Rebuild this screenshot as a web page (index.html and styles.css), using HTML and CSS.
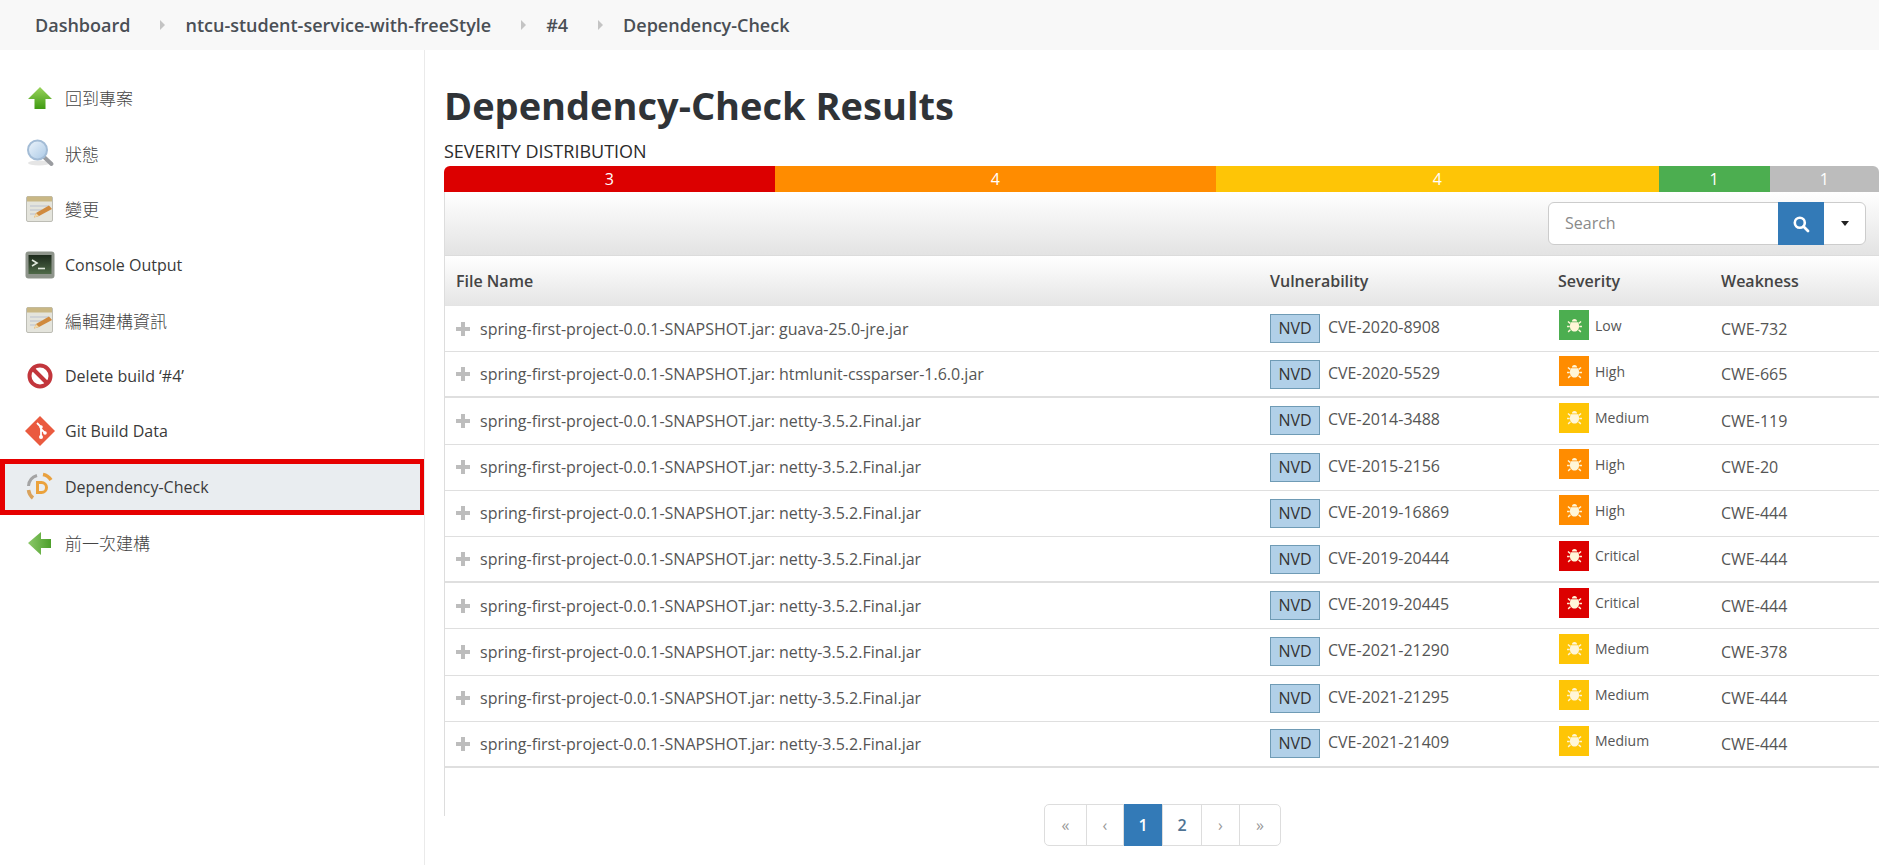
FILE: index.html
```html
<!DOCTYPE html>
<html lang="en">
<head>
<meta charset="utf-8">
<title>Dependency-Check Results</title>
<link rel="stylesheet" href="styles.css">
</head>
<body>
<svg class="defs" width="0" height="0" aria-hidden="true">
  <defs>
    <linearGradient id="gArrow" x1="0" y1="0" x2="0" y2="1"><stop offset="0" stop-color="#9ad45c"/><stop offset="1" stop-color="#3f9a12"/></linearGradient>
    <linearGradient id="gArrowL" x1="0" y1="0" x2="1" y2="0"><stop offset="0" stop-color="#8cc86a"/><stop offset="1" stop-color="#4d9f2b"/></linearGradient>
    <linearGradient id="gTerm" x1="0" y1="0" x2="0" y2="1"><stop offset="0" stop-color="#1d2a1c"/><stop offset="1" stop-color="#4f6a48"/></linearGradient>
    <linearGradient id="gLens" x1="0" y1="0" x2="1" y2="1"><stop offset="0" stop-color="#eef5fb"/><stop offset="1" stop-color="#a9c8e6"/></linearGradient>
    <symbol id="note" viewBox="0 0 30 30">
      <rect x="1.5" y="2.5" width="26" height="25" rx="1.5" fill="#e4e4dc" stroke="#bdbdb5"/>
      <rect x="2" y="2.5" width="25" height="5" fill="#c9b784"/>
      <path d="M5 12h19M5 16h12M5 20h9" stroke="#c7ccd2" stroke-width="1.4"/>
      <path d="M9 23.5l2-4.5L24 11.5l3 3.5-13 7z" fill="#d08a3e"/>
      <path d="M9 23.5l2-4.5 3 3z" fill="#f0d8a8"/>
    </symbol>
    <symbol id="bug" viewBox="0 0 16 16">
      <path d="M5.6 4.2a2.4 2.4 0 0 1 4.8 0z" fill="currentColor"/>
      <path d="M4.6 5h6.8c.6 1 .9 2.200.9 3.600 0 2.900-1.900 5-4.300 5s-4.300-2.100-4.300-5c0-1.400.3-2.600.9-3.600z" fill="currentColor"/>
      <path d="M4 6L1.800 4.200M12 6l2.200-1.800M3.500 9H1M12.500 9H15M4.200 12l-2.200 2M11.800 12l2.200 2" stroke="currentColor" stroke-width="1.300" fill="none"/>
    </symbol>
  </defs>
</svg>

<nav class="crumbs">
  <a class="crumb">Dashboard</a><span class="sep"></span>
  <a class="crumb">ntcu-student-service-with-freeStyle</a><span class="sep"></span>
  <a class="crumb">#4</a><span class="sep"></span>
  <a class="crumb">Dependency-Check</a>
</nav>

<div class="page">
  <aside class="side">
    <a class="item">
      <svg class="ico" viewBox="0 0 30 30"><path d="M15 4L27 16H20.500V26H9.500V16H3z" fill="url(#gArrow)"/></svg>
      <span class="cjk">回到專案</span>
    </a>
    <a class="item">
      <svg class="ico" viewBox="0 0 30 30"><ellipse cx="14" cy="25" rx="11" ry="2.500" fill="#e5e5e5"/><path d="M19 19l7.500 7" stroke="#9a9ca0" stroke-width="4" stroke-linecap="round"/><circle cx="12.500" cy="12" r="9.500" fill="url(#gLens)" stroke="#a3bcd6" stroke-width="2"/></svg>
      <span class="cjk">狀態</span>
    </a>
    <a class="item">
      <svg class="ico"><use href="#note"/></svg>
      <span class="cjk">變更</span>
    </a>
    <a class="item">
      <svg class="ico" viewBox="0 0 30 30"><rect x="0.500" y="1.500" width="29" height="27" rx="3" fill="#8f958c"/><rect x="3.500" y="5" width="23" height="19" fill="url(#gTerm)"/><path d="M7 10l5 3-5 3" fill="none" stroke="#e0e8dc" stroke-width="1.600"/><path d="M13 18.500h7" stroke="#e0e8dc" stroke-width="1.600"/></svg>
      <span>Console Output</span>
    </a>
    <a class="item">
      <svg class="ico"><use href="#note"/></svg>
      <span class="cjk">編輯建構資訊</span>
    </a>
    <a class="item">
      <svg class="ico" viewBox="0 0 30 30"><circle cx="15" cy="15" r="10.500" fill="#fff" stroke="#c2363c" stroke-width="4"/><path d="M8 8l14 14" stroke="#c2363c" stroke-width="4"/></svg>
      <span>Delete build ‘#4’</span>
    </a>
    <a class="item">
      <svg class="ico" viewBox="0 0 30 30"><path d="M15 0L30 15 15 30 0 15z" fill="#ea5a3f"/><path d="M12 7l4 4v9M16 13l4 4" fill="none" stroke="#fff" stroke-width="1.800"/><circle cx="16" cy="11" r="1.800" fill="#fff"/><circle cx="16" cy="21" r="2" fill="#fff"/><circle cx="20" cy="17" r="1.800" fill="#fff"/></svg>
      <span>Git Build Data</span>
    </a>
    <a class="item item-on">
      <svg class="ico" viewBox="0 0 30 30">
        <path d="M3.500 14A12 12 0 0 1 12 3.500" fill="none" stroke="#a4a4a4" stroke-width="3"/>
        <path d="M18 2.500A12 12 0 0 1 26 8" fill="none" stroke="#e9a13f" stroke-width="3.500"/>
        <path d="M3.500 18A12 12 0 0 0 8 26" fill="none" stroke="#d9a25c" stroke-width="3.500"/>
        <path d="M11 9h5.500a6.500 6.500 0 0 1 0 13H11zM14 12v7h2.500a3.500 3.500 0 0 0 0-7z" fill="#eba23c" fill-rule="evenodd"/>
      </svg>
      <span>Dependency-Check</span>
    </a>
    <a class="item">
      <svg class="ico" viewBox="0 0 30 30"><path d="M3 15L16 4v7h10v9H16v7z" fill="url(#gArrowL)"/></svg>
      <span class="cjk">前一次建構</span>
    </a>
  </aside>

  <main class="main">
    <h1 class="title">Dependency-Check Results</h1>
    <div class="dist-label">SEVERITY DISTRIBUTION</div>
    <div class="dist">
      <span class="seg seg-crit">3</span>
      <span class="seg seg-high">4</span>
      <span class="seg seg-med">4</span>
      <span class="seg seg-low">1</span>
      <span class="seg seg-none">1</span>
    </div>
    <section class="panel">
      <div class="toolbar">
        <div class="search">
          <span class="search-input">Search</span>
          <span class="search-btn"><svg width="18" height="18" viewBox="0 0 18 18"><circle cx="7.800" cy="7.800" r="5" fill="none" stroke="#fff" stroke-width="2.600"/><path d="M11.500 11.500l4.500 4.500" stroke="#fff" stroke-width="2.800" stroke-linecap="round"/></svg></span>
          <span class="search-more"><span class="caret"></span></span>
        </div>
      </div>
      <table class="grid">
        <colgroup><col class="c-file"><col class="c-vuln"><col class="c-sev"><col class="c-weak"></colgroup>
        <thead><tr><th>File Name</th><th>Vulnerability</th><th class="th-sev">Severity</th><th>Weakness</th></tr></thead>
        <tbody>
          <tr><td><span class="plus"></span>spring-first-project-0.0.1-SNAPSHOT.jar: guava-25.0-jre.jar</td><td><span class="nvd">NVD</span>CVE-2020-8908</td><td><span class="sev"><span class="bug b-low"><svg><use href="#bug"/></svg></span>Low</span></td><td>CWE-732</td></tr>
          <tr class="thick"><td><span class="plus"></span>spring-first-project-0.0.1-SNAPSHOT.jar: htmlunit-cssparser-1.6.0.jar</td><td><span class="nvd">NVD</span>CVE-2020-5529</td><td><span class="sev"><span class="bug b-high"><svg><use href="#bug"/></svg></span>High</span></td><td>CWE-665</td></tr>
          <tr><td><span class="plus"></span>spring-first-project-0.0.1-SNAPSHOT.jar: netty-3.5.2.Final.jar</td><td><span class="nvd">NVD</span>CVE-2014-3488</td><td><span class="sev"><span class="bug b-med"><svg><use href="#bug"/></svg></span>Medium</span></td><td>CWE-119</td></tr>
          <tr><td><span class="plus"></span>spring-first-project-0.0.1-SNAPSHOT.jar: netty-3.5.2.Final.jar</td><td><span class="nvd">NVD</span>CVE-2015-2156</td><td><span class="sev"><span class="bug b-high"><svg><use href="#bug"/></svg></span>High</span></td><td>CWE-20</td></tr>
          <tr><td><span class="plus"></span>spring-first-project-0.0.1-SNAPSHOT.jar: netty-3.5.2.Final.jar</td><td><span class="nvd">NVD</span>CVE-2019-16869</td><td><span class="sev"><span class="bug b-high"><svg><use href="#bug"/></svg></span>High</span></td><td>CWE-444</td></tr>
          <tr class="thick"><td><span class="plus"></span>spring-first-project-0.0.1-SNAPSHOT.jar: netty-3.5.2.Final.jar</td><td><span class="nvd">NVD</span>CVE-2019-20444</td><td><span class="sev"><span class="bug b-crit"><svg><use href="#bug"/></svg></span>Critical</span></td><td>CWE-444</td></tr>
          <tr><td><span class="plus"></span>spring-first-project-0.0.1-SNAPSHOT.jar: netty-3.5.2.Final.jar</td><td><span class="nvd">NVD</span>CVE-2019-20445</td><td><span class="sev"><span class="bug b-crit"><svg><use href="#bug"/></svg></span>Critical</span></td><td>CWE-444</td></tr>
          <tr><td><span class="plus"></span>spring-first-project-0.0.1-SNAPSHOT.jar: netty-3.5.2.Final.jar</td><td><span class="nvd">NVD</span>CVE-2021-21290</td><td><span class="sev"><span class="bug b-med"><svg><use href="#bug"/></svg></span>Medium</span></td><td>CWE-378</td></tr>
          <tr><td><span class="plus"></span>spring-first-project-0.0.1-SNAPSHOT.jar: netty-3.5.2.Final.jar</td><td><span class="nvd">NVD</span>CVE-2021-21295</td><td><span class="sev"><span class="bug b-med"><svg><use href="#bug"/></svg></span>Medium</span></td><td>CWE-444</td></tr>
          <tr class="thick"><td><span class="plus"></span>spring-first-project-0.0.1-SNAPSHOT.jar: netty-3.5.2.Final.jar</td><td><span class="nvd">NVD</span>CVE-2021-21409</td><td><span class="sev"><span class="bug b-med"><svg><use href="#bug"/></svg></span>Medium</span></td><td>CWE-444</td></tr>
        </tbody>
      </table>
      <div class="pager-wrap">
        <div class="pager">
          <a class="pg pg-w1 pg-dim">«</a><a class="pg pg-w2 pg-dim">‹</a><a class="pg pg-w3 pg-on">1</a><a class="pg pg-w3 pg-num">2</a><a class="pg pg-w4 pg-dim">›</a><a class="pg pg-w1 pg-dim">»</a>
        </div>
      </div>
    </section>
  </main>
</div>
</body>
</html>
```
FILE: styles.css
```css
* { box-sizing: border-box; }
html, body { height: 100%; }
body {
  margin: 0;
  overflow: hidden;
  background: #fff;
  color: #333;
  font-family: "Open Sans", "Noto Sans", "Noto Sans CJK TC", sans-serif;
  font-size: 16px;
}
.defs { position: absolute; }

.crumbs {
  height: 50px;
  background: #f8f8f8;
  display: flex;
  align-items: center;
  padding-left: 35px;
  font-size: 18px;
  font-weight: 600;
  color: #4a4f55;
}
.sep {
  width: 0; height: 0;
  margin: 0 20px 0 30px;
  border-left: 5px solid #c4c4c4;
  border-top: 5px solid transparent;
  border-bottom: 5px solid transparent;
}

.page { display: flex; height: 815px; }

.side {
  width: 425px;
  flex: none;
  padding-top: 20px;
  border-right: 1px solid #eaeaea;
}
.item {
  height: 55.6px;
  display: flex;
  align-items: center;
  gap: 10px;
  padding-left: 25px;
  font-size: 16px;
  font-weight: 500;
  color: #3a3a3a;
}
.ico { width: 30px; height: 30px; flex: none; }
.cjk { font-family: "Noto Sans CJK TC", sans-serif; font-weight: 300; font-size: 17px; color: #444; }
.item-on {
  background: #e9edf0;
  border: 5px solid #e60000;
  border-right-width: 4px;
  padding-left: 20px;
}

.main { flex: 1; min-width: 0; padding-left: 19px; }
.title {
  margin: 0;
  height: 77px;
  line-height: 110px;
  font-size: 38px;
  font-weight: 700;
  color: #2f3337;
}
.dist-label { height: 39px; padding-top: 12px; font-size: 18px; line-height: 24px; color: #2b2b2b; }
.dist {
  display: flex;
  height: 26px;
  border-radius: 6px 6px 0 0;
  overflow: hidden;
  color: #fff;
  font-size: 16px;
  line-height: 26px;
  text-align: center;
}
.seg-crit { flex: 330.5 0 0; background: #dc0000; }
.seg-high { flex: 441.5 0 0; background: #ff8c00; }
.seg-med  { flex: 442.5 0 0; background: #fec506; }
.seg-low  { flex: 111 0 0; background: #4cae50; }
.seg-none { flex: 109.5 0 0; background: #bcbcbc; }

.panel { border-left: 1px solid #ddd; height: 624px; }
.toolbar {
  height: 64px;
  padding: 10px 13px 0 0;
  display: flex;
  justify-content: flex-end;
  align-items: flex-start;
  background: linear-gradient(#fff, #e3e3e3);
  border-bottom: 1px solid #dcdcdc;
}
.search {
  display: flex;
  width: 318px;
  height: 43px;
  background: #fff;
  border: 1px solid #ccc;
  border-radius: 6px;
}
.search-input { flex: 1; padding-left: 16px; line-height: 41px; color: #8a8a8a; font-size: 16px; }
.search-btn { width: 46px; margin: -1px 0; background: #337ab7; display: flex; align-items: center; justify-content: center; }
.search-more { width: 41px; display: flex; align-items: center; justify-content: center; }
.caret { width: 0; height: 0; border: 4.5px solid transparent; border-top: 5px solid #222; border-bottom: 0; }

.grid { width: 100%; border-collapse: separate; border-spacing: 0; table-layout: fixed; color: #555; }
.c-file { width: 814px; }
.c-vuln { width: 294px; }
.c-sev { width: 157px; }
.grid th {
  height: 50px;
  padding: 0 0 0 11px;
  text-align: left;
  font-size: 16px;
  font-weight: 600;
  color: #444;
  background: linear-gradient(#fff, #e5e5e5);
  border-bottom: 1px solid #e4e4e4;
}
.grid .th-sev { padding-left: 5px; }
.grid td {
  height: 46.2px;
  padding: 0 0 0 11px;
  font-size: 16px;
  white-space: nowrap;
  border-bottom: 1px solid #dfdfdf;
}
.thick td { border-bottom-width: 2px; }
.plus {
  display: inline-block;
  position: relative;
  width: 14px;
  height: 14px;
  margin-right: 10px;
  vertical-align: -1px;
  background:
    linear-gradient(#bdbdbd, #bdbdbd) center / 14px 4px no-repeat,
    linear-gradient(#bdbdbd, #bdbdbd) center / 4px 14px no-repeat;
}
.nvd {
  display: inline-block;
  width: 50px;
  height: 29px;
  margin-right: 8px;
  line-height: 27px;
  text-align: center;
  vertical-align: middle;
  background: #b1d0e8;
  border: 1px solid #6f9bb5;
  color: #333;
}
.sev { display: inline-flex; align-items: center; gap: 6px; margin: -8px 0 0 -5px; font-size: 14px; vertical-align: middle; }
.bug { width: 30px; height: 30px; display: flex; align-items: center; justify-content: center; color: #fff6d8; }
.bug svg { width: 17px; height: 17px; }
.b-low { background: #4cae50; }
.b-high { background: #ff8c00; }
.b-med { background: #fec506; }
.b-crit { background: #dc0000; }

.pager-wrap { display: flex; padding: 36px 0 0 599px; }
.pager {
  display: flex;
  height: 42px;
  border: 1px solid #ddd;
  border-radius: 5px;
  font-size: 16px;
}
.pg { display: flex; align-items: center; justify-content: center; border-left: 1px solid #ddd; color: #3f6f96; font-weight: 600; }
.pg:first-child { border-left: 0; }
.pg-w1 { width: 41px; }
.pg-w2 { width: 37px; }
.pg-w3 { width: 39px; }
.pg-w4 { width: 38px; }
.pg-dim { color: #999; font-weight: 400; }
.pg-num { color: #4f7393; }
.pg-on { background: #337ab7; color: #fff; margin: -1px 0; }
```
